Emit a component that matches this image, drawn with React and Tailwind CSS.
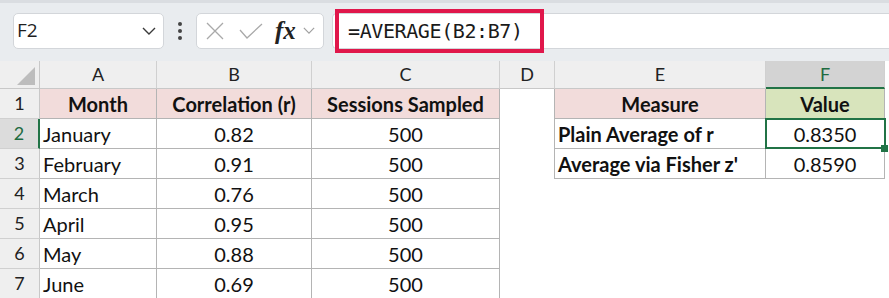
import React from 'react';

const cols = [
  { key: '', w: 'w-[40px]' },
  { key: 'A', w: 'w-[117px]' },
  { key: 'B', w: 'w-[155px]' },
  { key: 'C', w: 'w-[188px]' },
  { key: 'D', w: 'w-[55px]' },
  { key: 'E', w: 'w-[211px]' },
  { key: 'F', w: 'w-[119px]' },
];

const months = [
  ['January', '0.82'],
  ['February', '0.91'],
  ['March', '0.76'],
  ['April', '0.95'],
  ['May', '0.88'],
  ['June', '0.69'],
];

const Chevron = ({ className }) => (
  <svg viewBox="0 0 14 8" className={className} fill="none" stroke="currentColor" strokeWidth="1.4">
    <path d="M1 1l6 6 6-6" />
  </svg>
);

const TopBar = () => (
  <div className="h-[61px] bg-[#e9ecef] border-t-[3px] border-[#dadde1] flex items-center pl-[13px] pb-[3px]">
    <div className="w-[151px] h-[36px] bg-white border border-[#d3d6da] rounded-[5px] flex items-center justify-between pl-[3px] pr-[7px]">
      <span className="text-[19px] text-[#1f1f1f] font-['Open_Sans',sans-serif]">F2</span>
      <Chevron className="w-[14px] h-[8px] text-[#3a3a3a]" />
    </div>
    <div className="w-[32px] flex flex-col items-center gap-[3px]">
      <span className="w-[4px] h-[4px] bg-[#444] rounded-full" />
      <span className="w-[4px] h-[4px] bg-[#444] rounded-full" />
      <span className="w-[4px] h-[4px] bg-[#444] rounded-full" />
    </div>
    <div className="w-[128px] h-[36px] bg-white border border-[#d3d6da] rounded-[5px] flex items-center pl-[9px] pr-[5px]">
      <svg viewBox="0 0 18 18" className="w-[18px] h-[18px] text-[#a9a9a9]" stroke="currentColor" strokeWidth="1.3">
        <path d="M1 1l16 16M17 1L1 17" />
      </svg>
      <svg viewBox="0 0 24 16" className="w-[24px] h-[16px] ml-[15px] text-[#a9a9a9]" fill="none" stroke="currentColor" strokeWidth="1.3">
        <path d="M1 7l7 8L23 1" />
      </svg>
      <span className="ml-[12px] text-[25px] italic font-semibold text-[#222] font-['Liberation_Serif',serif] leading-none">fx</span>
      <Chevron className="w-[12px] h-[7px] ml-[7px] text-[#a0a0a0]" />
    </div>
    <div className="flex-1 h-[36px] ml-[8px] bg-white border-y border-l border-[#d3d6da] rounded-l-[5px] flex items-center">
      <div className="ml-[2px] w-[209px] h-[44px] border-[4px] border-[#e0174b] flex items-center pl-[9px]">
        <span className="text-[20px] text-[#1a1a1a] font-['DejaVu_Sans_Mono',monospace] tracking-[-0.4px]">=AVERAGE(B2:B7)</span>
      </div>
    </div>
  </div>
);

const HeaderRow = () => (
  <div className="flex h-[28px]">
    {cols.map((c, i) =>
      i === 0 ? (
        <div key="corner" className="w-[40px] bg-[#efefef] border-r border-b border-[#c8c8c8] relative">
          <svg viewBox="0 0 18 18" className="absolute left-[17px] top-[6px] w-[18px] h-[18px]">
            <path d="M18 0L18 18L0 18Z" fill="#bdbdbd" />
          </svg>
        </div>
      ) : (
        <div
          key={c.key}
          className={
            c.w +
            ' flex items-center justify-center text-[18px] font-["Lato",sans-serif] border-r border-[#d0d0d0] ' +
            (c.key === 'F'
              ? 'bg-[#d3d3d3] text-[#1e6b41] border-b-2 border-b-[#217346]'
              : 'bg-[#efefef] text-[#222] border-b border-b-[#c8c8c8]')
          }
        >
          {c.key}
        </div>
      )
    )}
  </div>
);

const RowHead = ({ n, sel }) => (
  <div
    className={
      'w-[40px] flex items-center justify-center text-[18px] font-["Lato",sans-serif] border-b border-[#d0d0d0] ' +
      (sel ? 'bg-[#dcdcdc] text-[#1e6b41] border-r-2 border-r-[#217346]' : 'bg-[#efefef] text-[#222] border-r border-r-[#c8c8c8]')
    }
  >
    {n}
  </div>
);

const cell = 'flex items-center border-r border-b border-[#b4b4b4] text-[20px] text-[#111] font-["Lato",sans-serif]';

const side = [
  { e: 'Measure', f: 'Value', head: true },
  { e: 'Plain Average of r', f: '0.8350', sel: true },
  { e: 'Average via Fisher z\'', f: '0.8590' },
];

export default function App() {
  return (
    <div className="w-[889px] h-[298px] bg-white overflow-hidden">
      <TopBar />
      <HeaderRow />
      <div className="flex h-[30px]">
        <RowHead n="1" />
        <div className={cell + ' w-[117px] justify-center font-bold bg-[#f2dcdb]'}>Month</div>
        <div className={cell + ' w-[155px] justify-center font-bold bg-[#f2dcdb]'}>Correlation (r)</div>
        <div className={cell + ' w-[188px] justify-center font-bold bg-[#f2dcdb]'}>Sessions Sampled</div>
        <div className="w-[55px] border-r border-[#b4b4b4]" />
        <div className={cell + ' w-[211px] justify-center font-bold bg-[#f2dcdb]'}>{side[0].e}</div>
        <div className={cell + ' w-[119px] justify-center font-bold bg-[#d8e4bc]'}>{side[0].f}</div>
      </div>
      {months.map(([m, r], i) => {
        const s = side[i + 1];
        return (
          <div key={m} className="flex h-[30px]">
            <RowHead n={i + 2} sel={i === 0} />
            <div className={cell + ' w-[117px] pl-[3px]'}>{m}</div>
            <div className={cell + ' w-[155px] justify-center'}>{r}</div>
            <div className={cell + ' w-[188px] justify-center'}>500</div>
            <div className={'w-[55px] ' + (s ? 'border-r border-[#b4b4b4]' : '')} />
            {s ? (
              <>
                <div className={cell + ' w-[211px] pl-[3px] font-bold'}>{s.e}</div>
                <div className={cell + ' w-[119px] justify-center relative'}>
                  {s.f}
                  {s.sel && (
                    <>
                      <div className="absolute z-10 -left-[1px] -top-[1px] w-[121px] h-[31px] border-2 border-[#217346]" />
                      <div className="absolute z-20 -right-[4px] -bottom-[4px] w-[7px] h-[7px] bg-[#217346]" />
                    </>
                  )}
                </div>
              </>
            ) : null}
          </div>
        );
      })}
    </div>
  );
}
